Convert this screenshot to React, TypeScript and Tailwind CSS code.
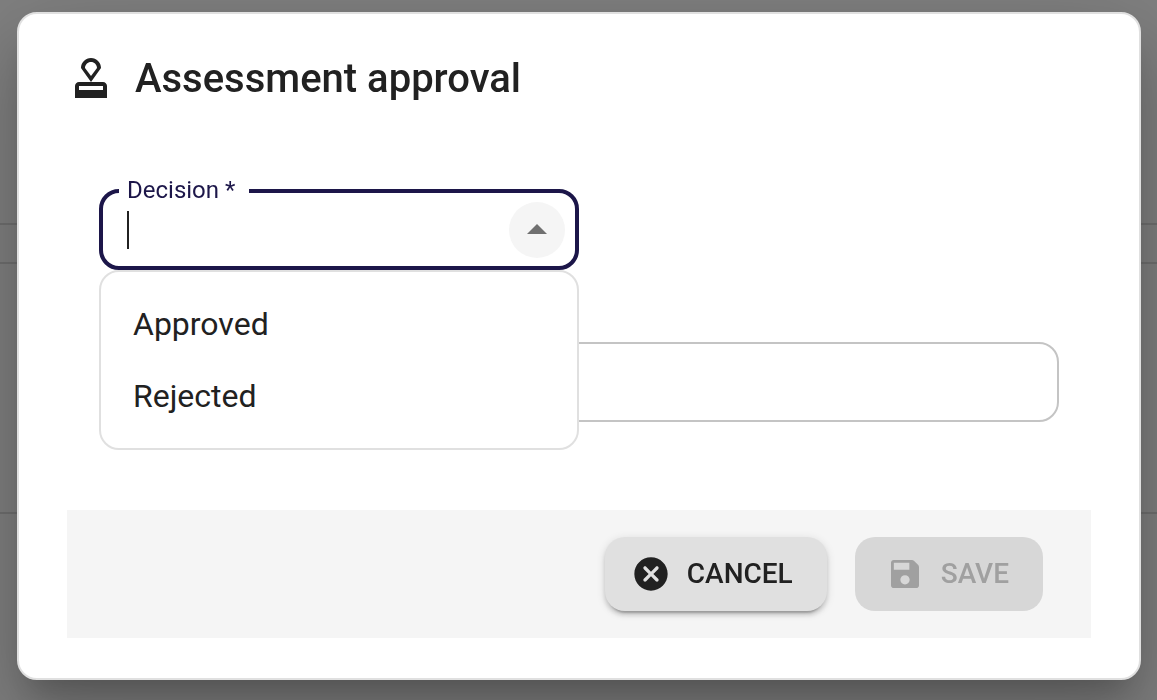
import React from "react";

const options = ["Approved", "Rejected"];

function ApprovalIcon() {
  return (
    <svg viewBox="0 0 24 24" className="size-12 shrink-0 fill-current" aria-hidden="true">
      <path d="M4 16v6h16v-6c0-1.1-.9-2-2-2H6c-1.1 0-2 .9-2 2zm14 2H6v-2h12v2zM12 2C9.24 2 7 4.24 7 7l5 7 5-7c0-2.76-2.24-5-5-5zm0 9L9 7c0-1.66 1.34-3 3-3s3 1.34 3 3l-3 4z" />
    </svg>
  );
}

function CancelIcon() {
  return (
    <svg viewBox="0 0 24 24" className="size-10 shrink-0 fill-current" aria-hidden="true">
      <path d="M12 2C6.47 2 2 6.47 2 12s4.47 10 10 10 10-4.47 10-10S17.53 2 12 2zm4.3 14.3c-.39.39-1.02.39-1.41 0L12 13.41 9.11 16.3c-.39.39-1.02.39-1.41 0-.39-.39-.39-1.02 0-1.41L10.59 12 7.7 9.11c-.39-.39-.39-1.02 0-1.41.39-.39 1.02-.39 1.41 0L12 10.59l2.89-2.89c.39-.39 1.02-.39 1.41 0 .39.39.39 1.02 0 1.41L13.41 12l2.89 2.89c.38.38.38 1.02 0 1.41z" />
    </svg>
  );
}

function SaveIcon() {
  return (
    <svg viewBox="0 0 24 24" className="size-10 shrink-0 fill-current" aria-hidden="true">
      <path d="M19.8 6.5 17.5 4.2c-.4-.4-.9-.6-1.4-.6H5.3c-1 0-1.7.8-1.7 1.7v13.4c0 1 .7 1.7 1.7 1.7h13.4c1 0 1.7-.7 1.7-1.7V7.9c0-.5-.2-1-.6-1.4zM12 18.3c-1.6 0-2.8-1.2-2.8-2.8s1.2-2.8 2.8-2.8 2.8 1.2 2.8 2.8-1.2 2.8-2.8 2.8zM14.6 9.4H5.3V5.3h9.3v4.1z" />
    </svg>
  );
}

function Backdrop() {
  return (
    <div className="fixed inset-0 -z-10 flex flex-col bg-[#808080]" aria-hidden="true">
      <div className="h-[225px] border-b-2 border-[#707070]" />
      <div className="h-[39px] border-b-2 border-[#707070]" />
      <div className="h-[250px] border-b-2 border-[#707070]" />
    </div>
  );
}

function DecisionField() {
  return (
    <div className="relative z-10 w-1/2">
      <div className="flex h-[81px] items-center rounded-[20px] border-4 border-[#1c1649] pr-[10px] pl-6">
        <span className="h-[38px] w-0.5 bg-[#212121]" aria-hidden="true" />
        <input
          id="decision"
          role="combobox"
          aria-expanded="true"
          aria-controls="decision-options"
          className="h-14 min-w-0 flex-1 bg-transparent text-[32px] caret-transparent outline-none"
        />
        <button
          type="button"
          aria-label="Close"
          className="flex size-14 shrink-0 items-center justify-center rounded-full bg-[#f5f5f5] text-[#707070]"
        >
          <svg viewBox="0 0 24 24" className="size-12 fill-current" aria-hidden="true">
            <path d="M7 14l5-5 5 5z" />
          </svg>
        </button>
      </div>
      <label
        htmlFor="decision"
        className="absolute -top-3 left-5 bg-white pr-3.5 pl-2 text-2xl leading-[26px] text-[#1c1649]"
      >
        Decision *
      </label>
      <ul
        id="decision-options"
        role="listbox"
        aria-label="Decision"
        className="absolute top-full left-0 w-full rounded-[20px] border-2 border-[#e0e0e0] bg-white py-4"
      >
        {options.map((option) => (
          <li
            key={option}
            role="option"
            aria-selected="false"
            className="flex h-[72px] items-center px-8 text-[32px]"
          >
            {option}
          </li>
        ))}
      </ul>
    </div>
  );
}

export default function App() {
  return (
    <div
      className={
        "isolate flex min-h-screen flex-col overflow-hidden pt-3 pr-4 pb-5 pl-[17px] text-[#212121] " +
        "font-[Roboto,sans-serif]"
      }
    >
      <Backdrop />
      <form
        role="dialog"
        aria-labelledby="dialog-title"
        className="flex flex-1 flex-col rounded-[20px] border-2 border-[#e0e0e0] bg-white px-12 pt-10 pb-10 shadow-[0_22px_30px_-14px_rgba(0,0,0,0.2),0_48px_76px_6px_rgba(0,0,0,0.14),0_18px_92px_16px_rgba(0,0,0,0.12)]"
      >
        <header className="flex h-12 items-start gap-5">
          <ApprovalIcon />
          <h1 id="dialog-title" className="text-[40px] leading-[50px] font-medium">
            Assessment approval
          </h1>
        </header>
        <div className="flex flex-col gap-[72px] px-8 pt-[87px]">
          <DecisionField />
          <input
            aria-label="Comment"
            className="h-20 w-full rounded-[20px] border-2 border-[#c4c4c4] px-7 text-[32px] outline-none"
          />
        </div>
        <footer className="mt-auto flex h-32 items-center justify-end gap-7 bg-[#f5f5f5] px-12">
          <button
            type="button"
            className="flex h-[74px] items-center gap-4 rounded-[20px] bg-[#e0e0e0] pr-[34px] pl-[26px] text-[28px] font-medium shadow-[0_6px_2px_-4px_rgba(0,0,0,0.2),0_4px_4px_0_rgba(0,0,0,0.14),0_2px_10px_0_rgba(0,0,0,0.12)]"
          >
            <CancelIcon />
            CANCEL
          </button>
          <button
            type="submit"
            disabled
            className="flex h-[74px] items-center gap-4 rounded-[20px] bg-[#d7d7d7] pr-[34px] pl-[30px] text-[28px] font-medium text-[#a0a0a0]"
          >
            <SaveIcon />
            SAVE
          </button>
        </footer>
      </form>
    </div>
  );
}
